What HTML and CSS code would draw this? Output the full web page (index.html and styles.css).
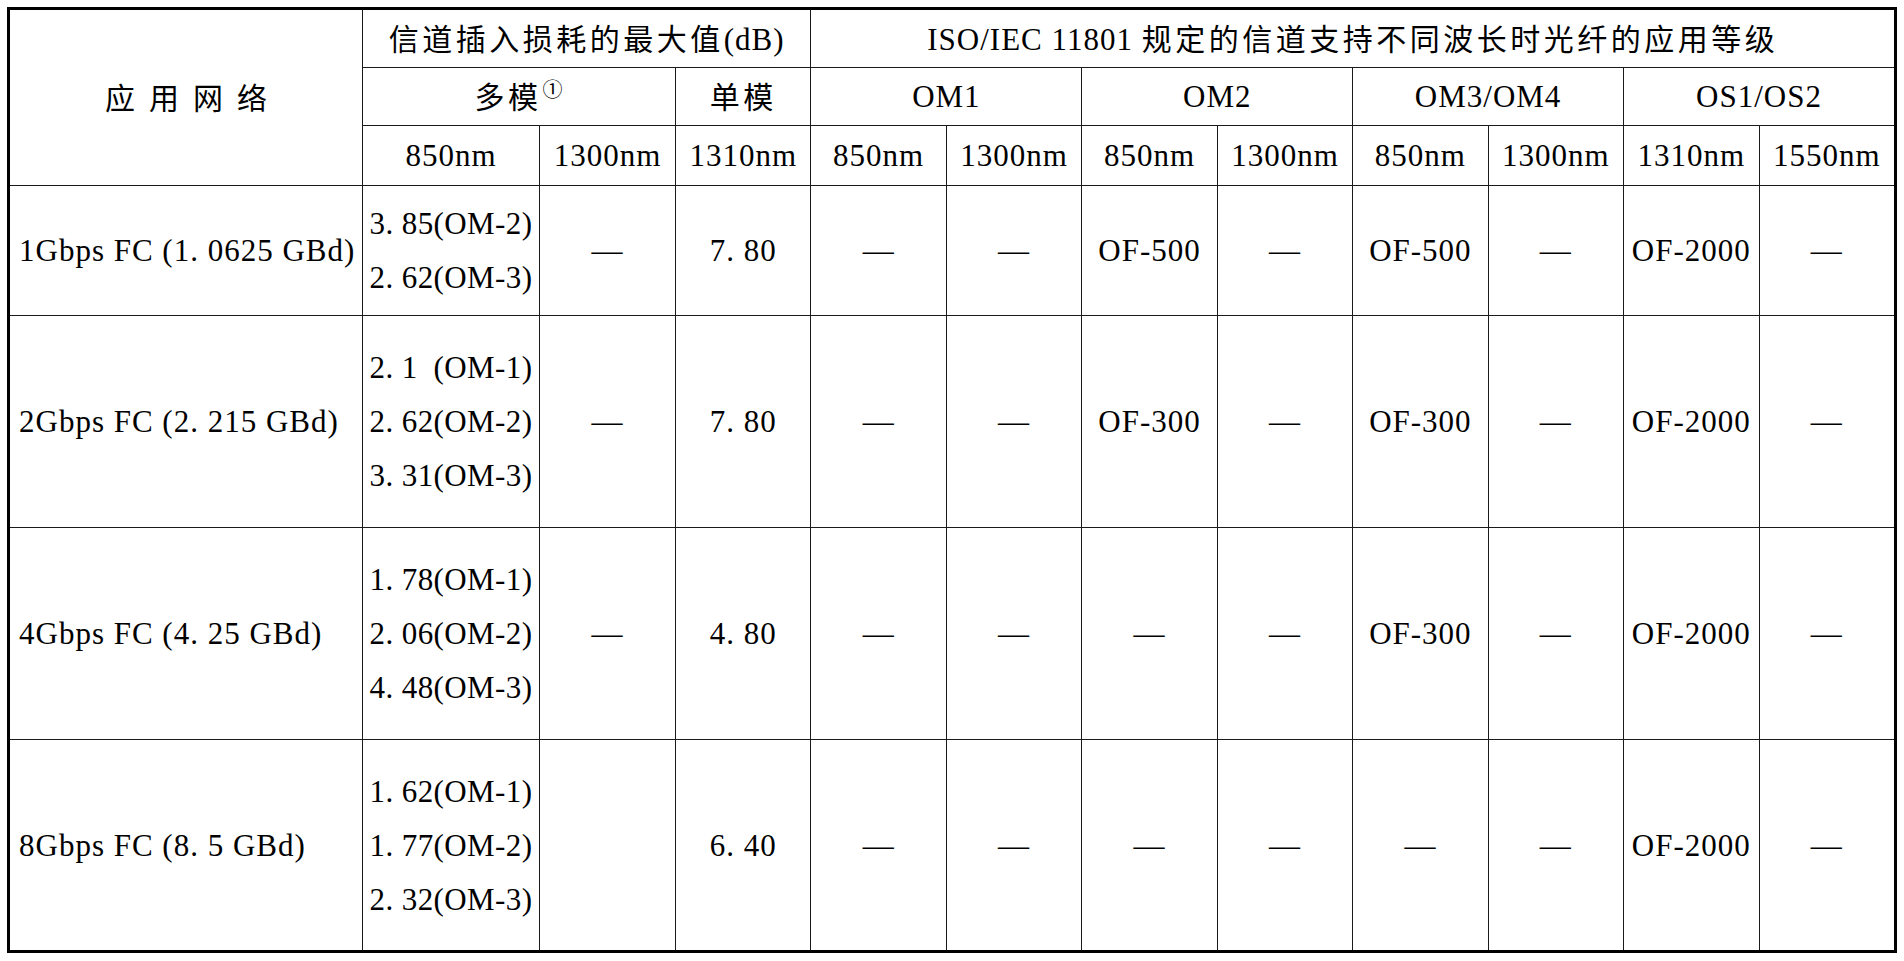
FILE: index.html
```html
<!DOCTYPE html>
<html lang="zh-CN">
<head>
<meta charset="utf-8">
<title>光纤信道应用等级</title>
<link rel="stylesheet" href="styles.css">
</head>
<body>
<div class="sheet">
<table class="grid">
  <colgroup>
    <col class="c-app">
    <col class="c-mm850">
    <col class="c-mm1300">
    <col span="9">
  </colgroup>
  <thead>
    <tr class="r-h1">
      <th rowspan="3"><span class="zh spread">应用网络</span></th>
      <th colspan="3"><span class="zh">信道插入损耗的最大值</span>(dB)</th>
      <th colspan="8">ISO/IEC 11801 <span class="zh">规定的信道支持不同波长时光纤的应用等级</span></th>
    </tr>
    <tr class="r-h2">
      <th colspan="2"><span class="zh">多模</span><sup class="note">①</sup></th>
      <th><span class="zh">单模</span></th>
      <th colspan="2">OM1</th>
      <th colspan="2">OM2</th>
      <th colspan="2">OM3/OM4</th>
      <th colspan="2">OS1/OS2</th>
    </tr>
    <tr class="r-h3">
      <th>850nm</th>
      <th>1300nm</th>
      <th>1310nm</th>
      <th>850nm</th>
      <th>1300nm</th>
      <th>850nm</th>
      <th>1300nm</th>
      <th>850nm</th>
      <th>1300nm</th>
      <th>1310nm</th>
      <th>1550nm</th>
    </tr>
  </thead>
  <tbody>
    <tr class="r-d2">
      <td class="app">1Gbps FC (1. 0625 GBd)</td>
      <td class="loss"><div>3. 85(OM-2)</div><div>2. 62(OM-3)</div></td>
      <td>—</td>
      <td>7. 80</td>
      <td>—</td>
      <td>—</td>
      <td>OF-500</td>
      <td>—</td>
      <td>OF-500</td>
      <td>—</td>
      <td>OF-2000</td>
      <td>—</td>
    </tr>
    <tr class="r-d3">
      <td class="app">2Gbps FC (2. 215 GBd)</td>
      <td class="loss"><div>2. 1&ensp;(OM-1)</div><div>2. 62(OM-2)</div><div>3. 31(OM-3)</div></td>
      <td>—</td>
      <td>7. 80</td>
      <td>—</td>
      <td>—</td>
      <td>OF-300</td>
      <td>—</td>
      <td>OF-300</td>
      <td>—</td>
      <td>OF-2000</td>
      <td>—</td>
    </tr>
    <tr class="r-d3">
      <td class="app">4Gbps FC (4. 25 GBd)</td>
      <td class="loss"><div>1. 78(OM-1)</div><div>2. 06(OM-2)</div><div>4. 48(OM-3)</div></td>
      <td>—</td>
      <td>4. 80</td>
      <td>—</td>
      <td>—</td>
      <td>—</td>
      <td>—</td>
      <td>OF-300</td>
      <td>—</td>
      <td>OF-2000</td>
      <td>—</td>
    </tr>
    <tr class="r-d3">
      <td class="app">8Gbps FC (8. 5 GBd)</td>
      <td class="loss"><div>1. 62(OM-1)</div><div>1. 77(OM-2)</div><div>2. 32(OM-3)</div></td>
      <td></td>
      <td>6. 40</td>
      <td>—</td>
      <td>—</td>
      <td>—</td>
      <td>—</td>
      <td>—</td>
      <td>—</td>
      <td>OF-2000</td>
      <td>—</td>
    </tr>
  </tbody>
</table>
</div>
</body>
</html>
```
FILE: styles.css
```css
html, body {
  margin: 0;
  padding: 0;
  background: #fff;
}

body {
  font-family: "Liberation Serif", "Noto Sans CJK SC", serif;
  color: #000;
}

.sheet {
  margin: 7px 0 0 7px;
  width: 1890px;
  height: 946px;
  box-sizing: border-box;
  border: 3px solid #000;
  overflow: hidden;
}

.grid {
  border-collapse: collapse;
  table-layout: fixed;
  width: 1886px;
  margin: -1px;
  font-size: 31px;
}

.c-app { width: 353px; }
.c-mm850 { width: 177px; }
.c-mm1300 { width: 136px; }

.grid th,
.grid td {
  border: 1px solid #1a1a1a;
  padding: 0;
  text-align: center;
  vertical-align: middle;
  font-weight: normal;
  white-space: pre;
  line-height: 36px;
  letter-spacing: 1px;
}

.r-h1 { height: 58px; }
.r-h2 { height: 58px; }
.r-h3 { height: 60px; }
.r-d2 { height: 130px; }
.r-d3 { height: 212px; }

.zh {
  font-family: "Noto Sans CJK SC", sans-serif;
  font-size: 30px;
  letter-spacing: 3.5px;
}

.spread {
  letter-spacing: 14px;
  padding-left: 14px;
}

.note {
  font-family: "Noto Sans CJK SC", sans-serif;
  font-size: 20px;
  vertical-align: 11px;
  line-height: 0;
  margin-left: 1px;
}

.grid td.app {
  text-align: left;
  padding-left: 9px;
}

.grid td.loss {
  line-height: 54px;
  letter-spacing: 0.4px;
}
```
